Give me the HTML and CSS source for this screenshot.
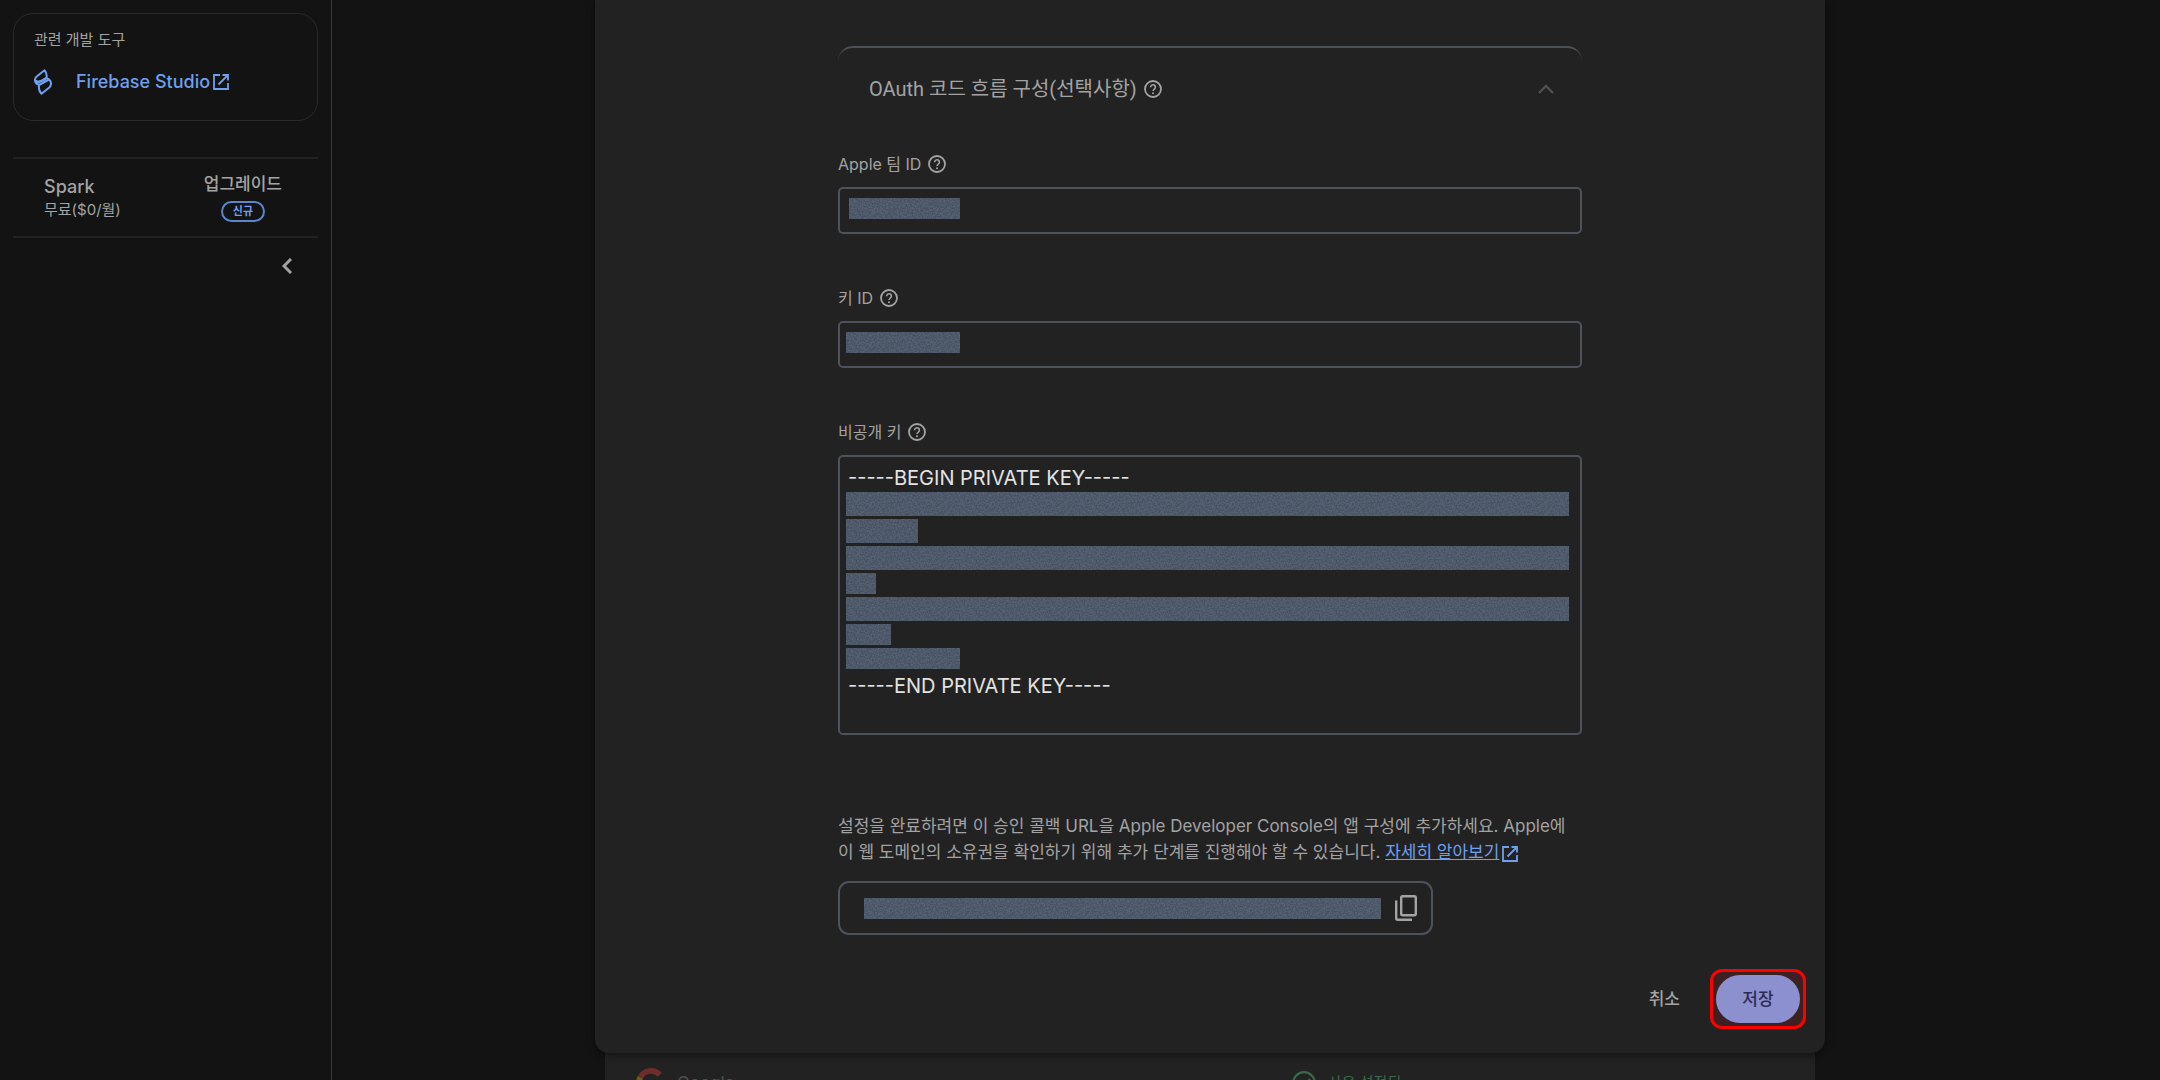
FILE: index.html
```html
<!DOCTYPE html>
<html lang="ko">
  <head>
    <meta charset="UTF-8" />
    <meta name="viewport" content="width=device-width, initial-scale=1.0" />
    <title>Firebase Console - Apple 로그인 설정</title>
    <link rel="stylesheet" href="styles.css">
  </head>
  <body>
    <!-- 공용 아이콘 -->
    <svg class="icon-defs" aria-hidden="true">
      <symbol id="icon-help" viewBox="0 0 18 18">
        <circle cx="9" cy="9" r="8" fill="none" stroke="currentColor" stroke-width="1.8" />
        <path d="M6.6 7.2a2.4 2.4 0 1 1 3.7 2c-.8.6-1.3.9-1.3 1.9" fill="none" stroke="currentColor" stroke-width="1.6" />
        <circle cx="9" cy="13.2" r="1" fill="currentColor" />
      </symbol>
      <symbol id="icon-open" viewBox="0 0 16 16">
        <path d="M7 1H1v14h14V9M9.500 1H15v5.500M15 1L5.500 10.500" fill="none" stroke="currentColor" stroke-width="1.8" />
      </symbol>
    </svg>

    <div class="app">
      <!-- 사이드바 -->
      <aside class="sidebar">
        <section class="tools-card">
          <h2 class="tools-title">관련 개발 도구</h2>
          <a class="tools-link" href="#">
            <svg class="studio-icon" viewBox="0 0 18 26" fill="none" stroke="currentColor" stroke-width="2" stroke-linejoin="round">
              <path d="M10.500 1.200L3 7.200C.500 9 .300 12.500 2.500 14.500L12.500 9C13 6 12.300 3 10.500 1.200z" />
              <path d="M7.500 24.800l7.500-6C17.700 16.500 17.700 12.500 15 10.500L5 16C4.500 20 5.700 23 7.500 24.800z" />
              <path d="M1.500 11.500q4.500 3 11-2.500M2.500 14.500L5 16M12.500 9l2.500 1.500" />
            </svg>
            <span>Firebase Studio</span>
            <svg class="open-icon"><use href="#icon-open" /></svg>
          </a>
        </section>

        <section class="plan">
          <div class="plan-info">
            <strong class="plan-name">Spark</strong>
            <span class="plan-price">무료($0/월)</span>
          </div>
          <a class="plan-upgrade" href="#">
            <span>업그레이드</span>
            <span class="badge">신규</span>
          </a>
        </section>

        <button class="collapse" type="button" aria-label="메뉴 접기">
          <svg viewBox="0 0 10 16" fill="none" stroke="currentColor" stroke-width="3"><path d="M9 1L2 8l7 7" /></svg>
        </button>
      </aside>

      <main class="main">
        <form class="dialog">
          <div class="form">
            <button class="panel-header" type="button">
              <span>OAuth 코드 흐름 구성(선택사항)</span>
              <svg class="help-icon"><use href="#icon-help" /></svg>
              <svg class="panel-arrow" viewBox="0 0 16 10" fill="none" stroke="currentColor" stroke-width="2.400"><path d="M1 9l7-7 7 7" /></svg>
            </button>

            <div class="field">
              <div class="field-label">
                <label for="teamId">Apple 팀 ID</label>
                <svg class="help-icon"><use href="#icon-help" /></svg>
              </div>
              <div class="field-box">
                <input type="text" id="teamId" />
                <div class="masks"><span class="mask mask-team"></span></div>
              </div>
            </div>

            <div class="field">
              <div class="field-label">
                <label for="keyId">키 ID</label>
                <svg class="help-icon"><use href="#icon-help" /></svg>
              </div>
              <div class="field-box">
                <input type="text" id="keyId" />
                <div class="masks"><span class="mask mask-key"></span></div>
              </div>
            </div>

            <div class="field">
              <div class="field-label">
                <label for="privateKey">비공개 키</label>
                <svg class="help-icon"><use href="#icon-help" /></svg>
              </div>
              <div class="field-box">
                <textarea id="privateKey" rows="10" spellcheck="false">-----BEGIN PRIVATE KEY-----







-----END PRIVATE KEY-----</textarea>
                <div class="masks masks-lines">
                  <span class="mask mask-tall mask-full"></span>
                  <span class="mask mask-tall mask-medium"></span>
                  <span class="mask mask-tall mask-full"></span>
                  <span class="mask mask-tiny"></span>
                  <span class="mask mask-tall mask-full"></span>
                  <span class="mask mask-small"></span>
                  <span class="mask mask-key"></span>
                </div>
              </div>
            </div>

            <p class="notice">
              설정을 완료하려면 이 승인 콜백 URL을 Apple Developer Console의 앱 구성에 추가하세요. Apple에 이 웹 도메인의 소유권을 확인하기 위해 추가 단계를 진행해야 할 수 있습니다.
              <a href="#">자세히 알아보기</a><svg class="open-icon"><use href="#icon-open" /></svg>
            </p>

            <div class="callback">
              <span class="mask mask-url"></span>
              <button class="copy" type="button" aria-label="복사">
                <svg viewBox="0 0 22 26" fill="none" stroke="currentColor" stroke-width="2.400">
                  <rect x="6.200" y="1.200" width="14.600" height="19" rx="1.500" />
                  <path d="M1.200 5.500v17.800q0 1.500 1.500 1.500H17" />
                </svg>
              </button>
            </div>
          </div>

          <div class="actions">
            <button class="cancel" type="button">취소</button>
            <div class="highlight">
              <button class="save" type="submit">저장</button>
            </div>
          </div>
        </form>

        <!-- 대화상자 뒤의 제공업체 목록 -->
        <div class="providers">
          <div class="provider">
            <svg class="google-icon" viewBox="0 0 24 24" fill="none" stroke-width="4.500">
              <path d="M3.500 7.500A9.500 9.500 0 0 1 19 5.500" stroke="#702c28" />
              <path d="M3.500 7.500a9.500 9.500 0 0 0 0 9" stroke="#6e5a18" />
              <path d="M3.500 16.500a9.500 9.500 0 0 0 14.500 3" stroke="#25553a" />
              <path d="M12 12h9.500q0 4.500-3.500 7.500" stroke="#2d3f66" />
            </svg>
            <span>Google</span>
          </div>
          <div class="status">
            <svg class="check-icon" viewBox="0 0 24 24" fill="none" stroke="currentColor" stroke-width="2.200">
              <circle cx="12" cy="12" r="10.800" />
              <path d="M6 12.500l4 4 8-8.500" />
            </svg>
            <span>사용 설정됨</span>
          </div>
        </div>
      </main>
    </div>
  </body>
</html>
```
FILE: styles.css
```css
* {
  box-sizing: border-box;
}

body {
  margin: 0;
  background-color: #131313;
  color: #a3a3a3;
  font-family: Inter, "Noto Sans CJK KR", sans-serif;
  font-size: 17px;
  line-height: 26px;
}

button,
input,
textarea {
  font: inherit;
  color: inherit;
}

button {
  padding: 0;
  border: none;
  background: none;
  cursor: pointer;
}

a {
  color: #6f9fed;
}

svg {
  display: block;
  flex: none;
}

.icon-defs {
  display: none;
}

.app {
  display: flex;
  height: 100vh;
  overflow: hidden;
}

/* 사이드바 */
.sidebar {
  flex: none;
  width: 332px;
  padding: 13px;
  border-right: 1px solid #383838;
}

.tools-card {
  height: 108px;
  padding: 14px 20px;
  border: 1px solid #2a2a2a;
  border-radius: 20px;
}

.tools-title {
  margin: 0 0 15px;
  font-size: 15px;
  font-weight: 400;
  line-height: 24px;
}

.tools-link {
  display: flex;
  align-items: center;
  font-size: 18px;
  font-weight: 500;
  text-decoration: none;
  line-height: 30px;
}

.studio-icon {
  width: 18px;
  height: 26px;
  margin-right: 24px;
}

.open-icon {
  width: 16px;
  height: 16px;
  margin-left: 3px;
}

.plan {
  display: flex;
  justify-content: space-between;
  height: 81px;
  margin-top: 36px;
  padding: 14px 36px 0 31px;
  border-top: 2px solid #222;
  border-bottom: 2px solid #222;
}

.plan-info,
.plan-upgrade {
  display: flex;
  flex-direction: column;
}

.plan-info {
  padding-top: 2px;
}

.plan-name {
  font-size: 18px;
  font-weight: 500;
  line-height: 24px;
}

.plan-price {
  font-size: 15px;
  line-height: 22px;
}

.plan-upgrade {
  align-items: center;
  color: inherit;
  font-weight: 500;
  line-height: 22px;
  text-decoration: none;
}

.badge {
  width: 44px;
  margin-top: 6px;
  border: 2px solid #5c86c9;
  border-radius: 11px;
  color: #6f9fed;
  font-size: 11px;
  font-weight: 700;
  line-height: 17px;
  text-align: center;
}

.collapse {
  display: block;
  margin: 20px 26px 0 auto;
}

.collapse svg {
  width: 10px;
  height: 16px;
}

/* 대화상자 */
.main {
  display: flex;
  flex: 1;
  flex-direction: column;
  align-items: center;
  padding-right: 72px;
}

.dialog {
  position: relative;
  z-index: 1;
  flex: none;
  width: 100%;
  max-width: 1230px;
  padding: 46px 19px 24px;
  border-radius: 0 0 14px 14px;
  background-color: #222;
  box-shadow: 0 2px 8px rgba(0, 0, 0, 0.5);
}

.form {
  max-width: 744px;
  margin: 0 auto;
}

.panel-header {
  display: flex;
  align-items: center;
  width: 100%;
  height: 84px;
  margin-bottom: 4px;
  padding: 0 28px 0 31px;
  border-top: 2px solid #4c5157;
  border-radius: 15px 15px 0 0;
  font-family: Roboto, "Noto Sans CJK KR", sans-serif;
  font-size: 20px;
}

.help-icon {
  width: 18px;
  height: 18px;
  margin-left: 7px;
}

.panel-arrow {
  width: 16px;
  height: 10px;
  margin-left: auto;
  color: #505050;
}

.field {
  padding-top: 17px;
  margin-bottom: 34px;
}

.field-label {
  display: flex;
  align-items: center;
  margin-bottom: 10px;
  font-size: 16px;
}

.field-box {
  position: relative;
}

.field-box input,
.field-box textarea {
  display: block;
  width: 100%;
  padding: 8px;
  border: 2px solid #4e535b;
  border-radius: 5px;
  outline: none;
  background: none;
  color: #e3e3e3;
  font-size: 20px;
}

.field-box input {
  height: 47px;
}

.field-box textarea {
  resize: none;
  overflow: hidden;
}

/* 가려진 값 */
.masks {
  position: absolute;
  top: 11px;
  right: 13px;
  left: 8px;
}

.masks-lines {
  display: flex;
  flex-direction: column;
  top: 37px;
  gap: 3px;
}

.mask {
  display: block;
  height: 21px;
  background-color: #465263;
  background-image: url("data:image/svg+xml,%3Csvg xmlns='http://www.w3.org/2000/svg' width='120' height='120'%3E%3Cfilter id='n' x='0' y='0' width='1' height='1'%3E%3CfeTurbulence type='fractalNoise' baseFrequency='.6' numOctaves='2' stitchTiles='stitch'/%3E%3CfeColorMatrix values='0 0 0 0 .12 0 0 0 0 .15 0 0 0 0 .2 3 0 0 0 -1'/%3E%3C/filter%3E%3Crect width='120' height='120' filter='url(%23n)' opacity='.6'/%3E%3C/svg%3E");
}

.mask-tall {
  height: 24px;
}

.mask-full {
  width: 100%;
}

.mask-key {
  width: 114px;
}

.mask-team {
  width: 111px;
  margin-left: 3px;
}

.mask-medium {
  width: 72px;
}

.mask-small {
  width: 45px;
}

.mask-tiny {
  width: 30px;
}

.notice {
  margin: 78px 0 16px;
  word-break: keep-all;
}

.notice .open-icon {
  display: inline-block;
  color: #6f9fed;
  vertical-align: -4px;
}

.callback {
  display: flex;
  align-items: center;
  justify-content: space-between;
  width: 80%;
  height: 54px;
  padding: 0 14px 0 24px;
  border: 2px solid #4e535b;
  border-radius: 11px;
}

.mask-url {
  flex: 1;
  margin-right: 14px;
}

.copy svg {
  width: 22px;
  height: 26px;
}

.actions {
  display: flex;
  align-items: center;
  justify-content: flex-end;
  gap: 30px;
  margin-top: 34px;
}

.cancel,
.save {
  font-weight: 500;
}

.highlight {
  padding: 3px;
  border: 3px solid #f00;
  border-radius: 12px;
  background-color: #3d2022;
}

.save {
  display: block;
  width: 84px;
  height: 48px;
  border-radius: 24px;
  background-color: #8c90cf;
  color: #2c2b56;
}

/* 제공업체 목록 */
.providers {
  display: flex;
  flex: none;
  width: 100%;
  max-width: 1210px;
  margin-top: -14px;
  padding: 29px 31px;
  background-color: #222;
  color: #505050;
}

.provider,
.status {
  display: flex;
  align-items: center;
}

.provider {
  flex: 4;
  gap: 11px;
}

.google-icon {
  width: 30px;
  height: 30px;
}

.status {
  flex: 3;
  gap: 12px;
  color: #37694a;
  font-size: 15px;
}

.check-icon {
  width: 24px;
  height: 24px;
}
```
